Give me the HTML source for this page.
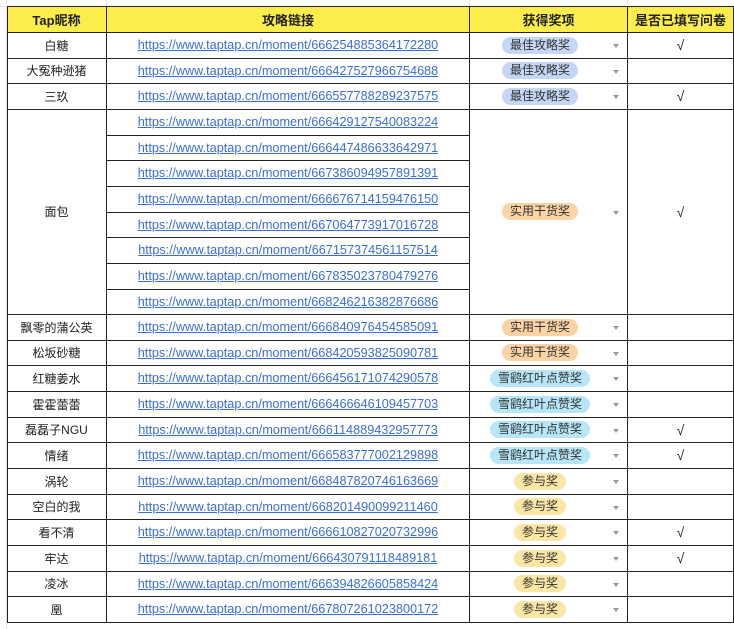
<!DOCTYPE html>
<html><head><meta charset="utf-8"><style>
body{margin:0;width:734px;height:629px;background:#fff;position:relative;overflow:hidden;font-family:"Liberation Sans","Noto Sans CJK SC",sans-serif;font-size:12px;color:#222}
.h{position:absolute;height:1px;background:#222}
.v{position:absolute;width:1px;background:#222}
.c{position:absolute;display:flex;align-items:center;justify-content:center}
a{color:#3a6fd8;text-decoration:underline;font-size:12.7px}
.p{padding:0 8px;border-radius:9px;height:17px;line-height:17px;color:#333}
.ar{position:absolute;width:0;height:0;border-left:3.5px solid transparent;border-right:3.5px solid transparent;border-top:4px solid #999}
.g{position:absolute;background:#e3e3e3}
.k{font-size:14px}
</style></head><body>
<div class="g" style="left:0;top:6px;width:734px;height:1px"></div>
<div class="g" style="left:6px;top:0;width:1px;height:629px"></div>
<div class="g" style="left:106px;top:0;width:1px;height:7px"></div>
<div class="g" style="left:469px;top:0;width:1px;height:7px"></div>
<div class="g" style="left:627px;top:0;width:1px;height:7px"></div>
<div style="position:absolute;left:7px;top:7px;width:726px;height:25px;background:#fcec4c"></div>
<div id="t"></div>
<script>
var d=[["白糖","666254885364172280","最佳攻略奖","b","√"],["大冤种逊猪","666427527966754688","最佳攻略奖","b",""],["三玖","666557788289237575","最佳攻略奖","b","√"],
["面包",["666429127540083224","666447486633642971","667386094957891391","666676714159476150","667064773917016728","667157374561157514","667835023780479276","668246216382876686"],"实用干货奖","o","√"],
["飘零的蒲公英","666840976454585091","实用干货奖","o",""],["松坂砂糖","668420593825090781","实用干货奖","o",""],["红糖姜水","666456171074290578","雪鹞红叶点赞奖","c",""],["霍霍蕾蕾","666466646109457703","雪鹞红叶点赞奖","c",""],["磊磊子NGU","666114889432957773","雪鹞红叶点赞奖","c","√"],["情绪","666583777002129898","雪鹞红叶点赞奖","c","√"],
["涡轮","668487820746163669","参与奖","y",""],["空白的我","668201490099211460","参与奖","y",""],["看不清","666610827020732996","参与奖","y","√"],["牢达","666430791118489181","参与奖","y","√"],["凌冰","666394826605858424","参与奖","y",""],["凰","667807261023800172","参与奖","y",""]];
var col={b:"#c5d6f6",o:"#fbd3a4",c:"#b6e6f8",y:"#fce6a4"};
function T(i){return Math.round(32+i*25.65);}
var h='';
h+='<div class="c" style="left:7px;top:7px;width:99px;height:25px;font-weight:bold;font-size:13px">Tap昵称</div>';
h+='<div class="c" style="left:107px;top:7px;width:362px;height:25px;font-weight:bold;font-size:13px">攻略链接</div>';
h+='<div class="c" style="left:470px;top:7px;width:157px;height:25px;font-weight:bold;font-size:13px">获得奖项</div>';
h+='<div class="c" style="left:628px;top:7px;width:105px;height:25px;font-weight:bold;font-size:13px">是否已填写问卷</div>';
h+='<div class="h" style="left:7px;top:6px;width:727px"></div><div class="h" style="left:7px;top:32px;width:727px"></div>';
var r=0;
d.forEach(function(e){
 var links=Array.isArray(e[1])?e[1]:[e[1]];var n=links.length;var t=T(r),b=T(r+n);
 h+='<div class="c" style="left:7px;top:'+t+'px;width:99px;height:'+(b-t)+'px">'+e[0]+'</div>';
 links.forEach(function(l,k){var tt=T(r+k),bb=T(r+k+1);
  h+='<div class="c" style="left:107px;top:'+tt+'px;width:362px;height:'+(bb-tt)+'px"><a>https://www.taptap.cn/moment/'+l+'</a></div>';
  if(k<n-1)h+='<div class="h" style="left:107px;top:'+bb+'px;width:363px"></div>';});
 h+='<div class="c" style="left:470px;top:'+t+'px;width:140px;height:'+(b-t)+'px"><span class="p" style="background:'+col[e[3]]+'">'+e[2]+'</span></div>';
 h+='<div class="ar" style="left:613px;top:'+((t+b)/2-1)+'px"></div>';
 h+='<div class="c k" style="left:628px;top:'+t+'px;width:105px;height:'+(b-t)+'px">'+e[4]+'</div>';
 h+='<div class="h" style="left:7px;top:'+b+'px;width:727px"></div>';
 r+=n;});
[7,106,469,627,733].forEach(function(x){h+='<div class="v" style="left:'+x+'px;top:6px;height:617px"></div>';});
document.getElementById('t').innerHTML=h;
</script>
</body></html>
